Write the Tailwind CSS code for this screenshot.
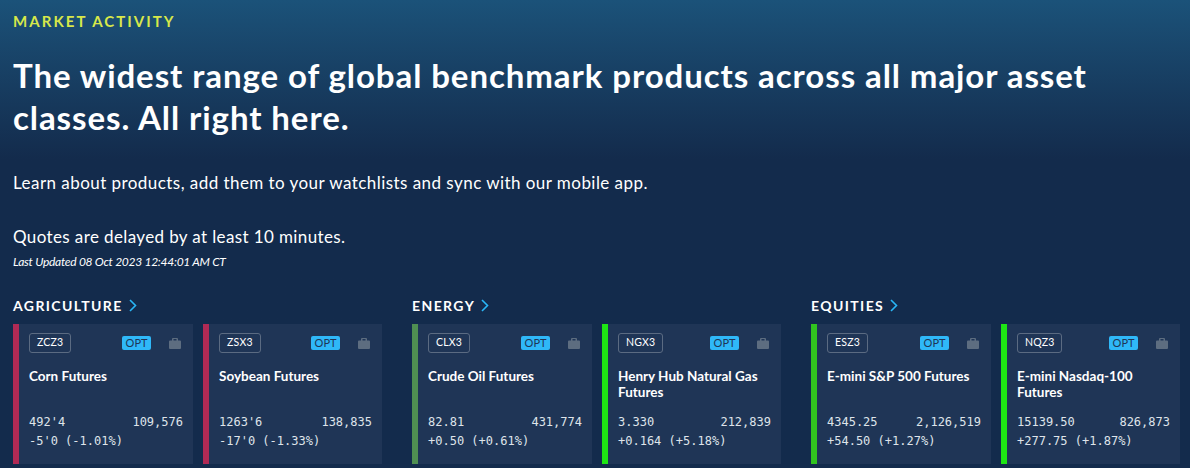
<!DOCTYPE html>
<html lang="en">
  <head>
    <meta charset="UTF-8" />
    <title>Market Activity</title>
    <script src="https://cdn.jsdelivr.net/npm/@tailwindcss/browser@4"></script>
  </head>
  <body class="h-[468px] overflow-hidden bg-[#132b4c] font-['Lato',sans-serif] text-white">
    <div class="h-[468px] bg-gradient-to-b from-[#1b5279] from-0% to-[#132b4c] to-[34%] pl-[13px]">
      <p class="pt-[12px] text-[15px] leading-[18px] font-bold tracking-[2.05px] text-[#d7e84a]">MARKET ACTIVITY</p>
      <h1 class="mt-[24px] w-[1120px] text-[33px] leading-[42px] font-bold tracking-[0.92px]">The widest range of global benchmark products across all major asset classes. All right here.</h1>
      <p class="mt-[34px] text-[17px] leading-[22px] tracking-[0.45px]">Learn about products, add them to your watchlists and sync with our mobile app.</p>
      <p class="mt-[32px] text-[17px] leading-[22px] tracking-[0.38px]">Quotes are delayed by at least 10 minutes.</p>
      <p class="mt-[6px] text-[12px] leading-[16px] tracking-[-0.27px] italic">Last Updated 08 Oct 2023 12:44:01 AM CT</p>

      <div id="sections" class="mt-[26px] flex"></div>
    </div>

    <script>
      const sections = [
        {
          name: "AGRICULTURE",
          cards: [
            { sym: "ZCZ3", title: "Corn Futures", last: "492'4", vol: "109,576", chg: "-5'0 (-1.01%)", stripe: "border-[#b02a55]" },
            { sym: "ZSX3", title: "Soybean Futures", last: "1263'6", vol: "138,835", chg: "-17'0 (-1.33%)", stripe: "border-[#b02a55]" },
          ],
        },
        {
          name: "ENERGY",
          cards: [
            { sym: "CLX3", title: "Crude Oil Futures", last: "82.81", vol: "431,774", chg: "+0.50 (+0.61%)", stripe: "border-[#4f8f52]" },
            { sym: "NGX3", title: "Henry Hub Natural Gas Futures", last: "3.330", vol: "212,839", chg: "+0.164 (+5.18%)", stripe: "border-[#1ee614]" },
          ],
        },
        {
          name: "EQUITIES",
          cards: [
            { sym: "ESZ3", title: "E-mini S&amp;P 500 Futures", last: "4345.25", vol: "2,126,519", chg: "+54.50 (+1.27%)", stripe: "border-[#31c41f]" },
            { sym: "NQZ3", title: "E-mini Nasdaq-100 Futures", last: "15139.50", vol: "826,873", chg: "+277.75 (+1.87%)", stripe: "border-[#1ee614]" },
          ],
        },
      ];

      function cardHtml(c, i) {
        return `
          <article class="h-[140px] ${i === 0 ? "w-[180px]" : "w-[179px]"} border-l-[6px] ${c.stripe} bg-[#1f3556] pt-[9px] pr-[10px] pl-[10px]">
            <div class="flex h-[20px] items-center">
              <span class="flex h-[20px] items-center rounded-[3px] border border-[#5b6b82] px-[7px] text-[10.5px] tracking-[0.2px]">${c.sym}</span>
              <span class="ml-auto flex h-[14px] items-center rounded-[2px] bg-[#2fb8f8] px-[3.5px] text-[11px] text-[#1f3556]">OPT</span>
              <svg class="mr-[2px] ml-[18px] h-[11px] w-[12px]" viewBox="0 0 12 11" fill="#5d6d80"><path d="M4 0h4a1 1 0 0 1 1 1v1.500h2a1 1 0 0 1 1 1V10a1 1 0 0 1-1 1H1a1 1 0 0 1-1-1V3.500a1 1 0 0 1 1-1h2V1a1 1 0 0 1 1-1zm.500 1v1.500h3V1z" /></svg>
            </div>
            <h3 class="mt-[15px] h-[32px] text-[13.5px] leading-[16px] font-bold">${c.title}</h3>
            <div class="mt-[13px] font-['DejaVu_Sans_Mono',monospace] text-[12px] leading-[19px] text-[#dfe4ea]">
              <div class="flex justify-between"><span>${c.last}</span><span>${c.vol}</span></div>
              <div>${c.chg}</div>
            </div>
          </article>`;
      }

      document.getElementById("sections").innerHTML = sections
        .map(
          (s) => `
          <section class="w-[399px] shrink-0">
            <h2 class="flex h-[18px] items-center gap-[6px] text-[14px] font-bold tracking-[1.4px]">
              ${s.name}
              <svg class="h-[13px] w-[8px]" viewBox="0 0 8 13" fill="none" stroke="#29b6f6" stroke-width="1.6"><path d="M1 1l5.500 5.500L1 12" /></svg>
            </h2>
            <div class="mt-[10px] flex gap-[10px]">${s.cards.map(cardHtml).join("")}</div>
          </section>`
        )
        .join("");
    </script>
  </body>
</html>
